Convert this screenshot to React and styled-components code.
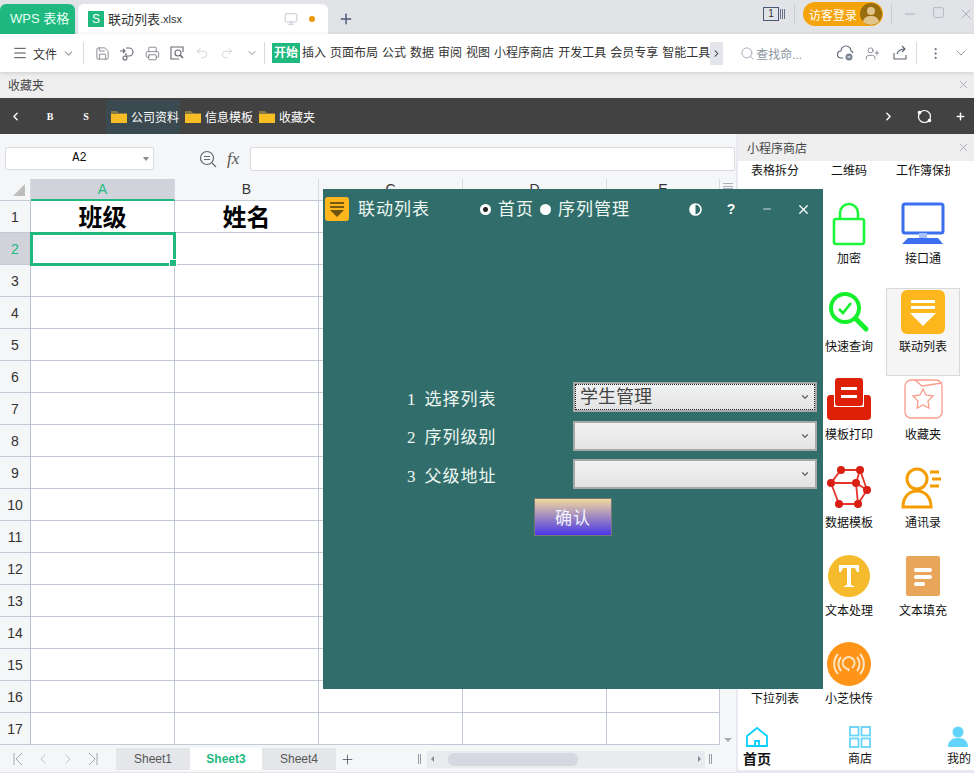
import React from "react";
import styled, { createGlobalStyle } from "styled-components";
import {
  ChevronDown,
  ChevronLeft,
  ChevronRight,
  Menu,
  Minus,
  Monitor,
  MoreVertical,
  Plus,
  Printer,
  Redo2,
  Save,
  Search,
  Square,
  Undo2,
  UserPlus,
  X,
} from "lucide-react";

const SANS = `"Liberation Sans", "Noto Sans CJK SC", sans-serif`;
const SONG = `"Liberation Serif", "Noto Sans CJK SC", serif`;

const GlobalStyle = createGlobalStyle`
  html, body {
    margin: 0;
    padding: 0;
    background: #fff;
  }
  * {
    box-sizing: border-box;
  }
`;

const Page = styled.div`
  position: relative;
  width: 974px;
  height: 773px;
  overflow: hidden;
  display: flex;
  flex-direction: column;
  font-family: ${SANS};
  font-size: 12px;
  color: #222;
  background: #fff;
`;

/* title bar */
const TitleBar = styled.div`
  height: 34px;
  flex: none;
  display: flex;
  align-items: flex-end;
  background: #e2e3e7;
`;
const AppTab = styled.div`
  width: 75px;
  height: 30px;
  background: #1fb97f;
  border-radius: 6px 6px 0 0;
  color: #e8fff5;
  font-size: 13px;
  line-height: 30px;
  padding-left: 10px;
`;
const DocTab = styled.div`
  width: 250px;
  height: 30px;
  margin-left: 3px;
  padding-bottom: 1px;
  background: #fff;
  border-radius: 6px 6px 0 0;
  display: flex;
  align-items: center;
  padding-left: 10px;
  font-size: 13px;
  color: #333;
`;
const DocBadge = styled.span`
  width: 16px;
  height: 16px;
  margin-right: 4px;
  background: #1fb97f;
  color: #fff;
  font-size: 12px;
  line-height: 16px;
  text-align: center;
`;
const DocExt = styled.span`
  font-size: 11px;
  flex: 1;
`;
const DocDot = styled.span`
  width: 6px;
  height: 6px;
  margin: 0 13px 0 11px;
  border-radius: 50%;
  background: #e89a0c;
`;
const NewTab = styled.div`
  width: 36px;
  height: 30px;
  display: flex;
  align-items: center;
  justify-content: center;
  color: #4a5878;
`;
const TitleRight = styled.div`
  margin-left: auto;
  margin-right: -6px;
  height: 34px;
  display: flex;
  align-items: center;
  padding-bottom: 6px;
`;
const WindowCount = styled.div`
  width: 16px;
  height: 14px;
  border: 1px solid #4a5878;
  color: #333;
  font-size: 10px;
  line-height: 12px;
  text-align: center;
  margin-right: 1px;
`;
const CountLines = styled.div`
  width: 5px;
  height: 10px;
  margin-right: 9px;
  background: repeating-linear-gradient(90deg, #6a7488 0 1px, transparent 1px 2px);
`;
const TitleSep = styled.div`
  width: 1px;
  height: 20px;
  background: #c9ccd3;
`;
const LoginPill = styled.div`
  width: 80px;
  height: 24px;
  margin: 0 8px;
  padding-left: 6px;
  border-radius: 12px;
  background: #f5a30a;
  color: #fff;
  font-size: 12px;
  display: flex;
  align-items: center;
  justify-content: space-between;
  padding-right: 1px;
`;
const WinButtons = styled.div`
  margin-left: 4px;
  display: flex;
`;
const WinButton = styled.div`
  width: 28px;
  display: flex;
  justify-content: center;
  color: #9aa2b4;
`;

/* ribbon */
const Ribbon = styled.div`
  height: 38px;
  flex: none;
  position: relative;
  z-index: 1;
  display: flex;
  align-items: center;
  background: #fff;
  box-shadow: 0 1px 4px rgba(0, 0, 0, 0.14);
  color: #333;
`;
const FileMenu = styled.div`
  width: 83px;
  display: flex;
  align-items: center;
  padding-left: 12px;
  gap: 5px;
  font-size: 12px;
`;
const RibbonSep = styled.div`
  width: 1px;
  height: 22px;
  margin-left: ${(p) => p.$left || 0}px;
  background: #d8dade;
  flex: none;
`;
const QuickTools = styled.div`
  width: 180px;
  padding-left: 6px;
  display: flex;
  align-items: center;
`;
const QuickTool = styled.span`
  width: 25px;
  display: flex;
  justify-content: center;
  color: ${(p) => (p.$off ? "#c6c8cc" : "#666a72")};
`;
const RibbonTabs = styled.div`
  display: flex;
  align-items: center;
  margin-left: 7px;
`;
const RibbonTab = styled.div`
  height: 20px;
  line-height: 20px;
  padding: 0 ${(p) => (p.$active ? "2px" : "0")};
  margin-right: ${(p) => (p.$active ? "2px" : "4px")};
  background: ${(p) => (p.$active ? "#1fb97f" : "transparent")};
  color: ${(p) => (p.$active ? "#fff" : "#333")};
  font-weight: ${(p) => (p.$active ? "bold" : "normal")};
  font-size: 12px;
  white-space: nowrap;
`;
const TabMore = styled.div`
  width: 13px;
  height: 23px;
  margin-left: -4px;
  background: #e3e5ea;
  display: flex;
  align-items: center;
  justify-content: center;
`;
const SearchBox = styled.div`
  margin-left: 17px;
  width: 92px;
  display: flex;
  align-items: center;
  gap: 1px;
  color: #8d93a0;
  font-size: 12px;
`;
const RibbonRight = styled.div`
  display: flex;
  align-items: center;
`;
const RibbonIcon = styled.span`
  width: ${(p) => p.$width || 27}px;
  display: flex;
  justify-content: center;
  color: #5a6272;
`;

/* favourites */
const FavHeader = styled.div`
  height: 26px;
  flex: none;
  display: flex;
  align-items: center;
  justify-content: space-between;
  padding: 0 4px 1px 8px;
  background: #eeeeef;
  color: #444;
`;
const CloseSmall = styled.span`
  display: flex;
  color: #858c9c;
`;
const DarkBar = styled.div`
  height: 36px;
  flex: none;
  display: flex;
  align-items: center;
  background: #424242;
  color: #fff;
`;
const DarkNav = styled.span`
  width: 32px;
  display: flex;
  justify-content: center;
  padding-right: 2px;
`;
const DriveLetter = styled.span`
  width: 36px;
  text-align: center;
  font-family: ${SONG};
  font-size: 10px;
  font-weight: bold;
`;
const FolderItem = styled.div`
  height: 34px;
  margin-top: 1px;
  margin-left: ${(p) => p.$left || 0}px;
  padding: 0 1px 0 5px;
  display: flex;
  align-items: center;
  gap: 4px;
  background: ${(p) => (p.$active ? "#3b4a50" : "transparent")};
  font-size: 12px;
`;
const DarkRight = styled.div`
  margin-left: auto;
  margin-right: -4px;
  display: flex;
  align-items: center;
`;
const DarkTool = styled.span`
  width: 36px;
  display: flex;
  justify-content: center;
`;

/* main area */
const Main = styled.div`
  flex: 1;
  display: flex;
  min-height: 0;
`;
const SheetPane = styled.div`
  width: 736px;
  flex: none;
  display: flex;
  flex-direction: column;
  background: #f5f6f8;
`;
const FormulaBar = styled.div`
  height: 45px;
  flex: none;
  padding: 13px 1px 0 5px;
  display: flex;
  align-items: flex-start;
`;
const NameBox = styled.div`
  width: 149px;
  height: 23px;
  position: relative;
  background: #fff;
  border: 1px solid #d9dbe0;
  border-radius: 2px;
  text-align: center;
  line-height: 21px;
  font-family: "Liberation Mono", monospace;
  font-size: 12px;
  color: #111;
  &::after {
    content: "";
    position: absolute;
    right: 4px;
    top: 9px;
    border: 3px solid transparent;
    border-top: 4px solid #888;
    border-bottom: 0;
  }
`;
const FormulaTools = styled.div`
  width: 96px;
  height: 23px;
  padding-left: 45px;
  display: flex;
  align-items: center;
  gap: 10px;
  color: #666a72;
`;
const Fx = styled.span`
  font-family: "Liberation Serif", serif;
  font-style: italic;
  font-size: 17px;
  color: #555;
`;
const FormulaInput = styled.div`
  flex: 1;
  height: 24px;
  background: #fff;
  border: 1px solid #d9dbe0;
  border-radius: 2px;
`;
const SheetBody = styled.div`
  flex: 1;
  min-height: 0;
  display: flex;
  overflow: hidden;
`;
const Grid = styled.div`
  width: 720px;
  flex: none;
  display: grid;
  grid-template-columns: 31px 144px 144px 144px 144px 113px;
  grid-template-rows: 22px repeat(17, 32px);
  background: #fff;
`;
const Corner = styled.div`
  background: #f5f6f8;
  border-right: 1px solid #d8dbe3;
  border-bottom: 1px solid #c2c8d6;
  position: relative;
  &::after {
    content: "";
    position: absolute;
    right: 5px;
    bottom: 4px;
    border-left: 12px solid transparent;
    border-bottom: 12px solid #bdbdbd;
  }
`;
const ColHead = styled.div`
  background: ${(p) => (p.$active ? "#d0d3da" : "#f5f6f8")};
  color: ${(p) => (p.$active ? "#1fb97f" : "#333")};
  border-right: 1px solid #d8dbe3;
  border-bottom: ${(p) => (p.$active ? "2px solid #1fb97f" : "1px solid #c2c8d6")};
  text-align: center;
  font-size: 14px;
  line-height: 21px;
`;
const RowHead = styled.div`
  background: ${(p) => (p.$active ? "#d0d3da" : "#f5f6f8")};
  color: ${(p) => (p.$active ? "#1fb97f" : "#333")};
  border-right: 1px solid #b9c1d2;
  border-bottom: 1px solid #c2c8d6;
  text-align: center;
  font-size: 14px;
  line-height: 32px;
`;
const Cell = styled.div`
  position: relative;
  border-right: 1px solid #c2c8d6;
  border-bottom: 1px solid #c2c8d6;
  text-align: center;
  font-size: 24px;
  font-weight: bold;
  line-height: 33px;
  color: #000;
  ${(p) =>
    p.$selected &&
    `
    z-index: 1;
    outline: 3px solid #1fb97f;
    outline-offset: -2px;
    &::after {
      content: "";
      position: absolute;
      right: -3px;
      bottom: -3px;
      width: 6px;
      height: 6px;
      background: #1fb97f;
      border: 1px solid #fff;
    }
  `}
`;
const VScroll = styled.div`
  flex: 1;
  display: flex;
  flex-direction: column;
  justify-content: space-between;
  align-items: center;
  padding: 4px 0 3px;
  background: #f5f6f8;
`;
const ScrollLines = styled.div`
  width: 10px;
  height: 6px;
  border-top: 1px solid #a9afbc;
  border-bottom: 1px solid #a9afbc;
  background: linear-gradient(#a9afbc, #a9afbc) center / 100% 1px no-repeat;
`;
const ScrollArrow = styled.div`
  border: 4px solid transparent;
  border-top: 4px solid #a4a9b5;
  border-bottom: 0;
`;
const TabBar = styled.div`
  height: 28px;
  flex: none;
  display: flex;
  align-items: flex-end;
  padding-bottom: 2px;
  background: #f5f6f8;
  border-bottom: 1px solid #e4e5ea;
`;
const TabNav = styled.div`
  width: 116px;
  height: 22px;
  padding-left: 5px;
  display: flex;
  align-items: center;
  color: #a4a9b5;
`;
const TabNavItem = styled.span`
  width: 25px;
  display: flex;
  justify-content: center;
`;
const SheetTab = styled.div`
  width: ${(p) => (p.$active ? "72px" : "74px")};
  height: 22px;
  line-height: 22px;
  text-align: center;
  font-size: 12px;
  background: ${(p) => (p.$active ? "#fff" : "#e5e6ea")};
  color: ${(p) => (p.$active ? "#1fb97f" : "#555")};
  font-weight: ${(p) => (p.$active ? "bold" : "normal")};
`;
const TabAdd = styled.div`
  width: 22px;
  height: 22px;
  display: flex;
  align-items: center;
  justify-content: center;
  color: #445;
`;
const Grip = styled.div`
  width: 3px;
  height: 10px;
  margin: 0 0 6px ${(p) => p.$left}px;
  border-left: 1px solid #99a;
  border-right: 1px solid #99a;
`;
const HScroll = styled.div`
  width: 278px;
  height: 17px;
  margin: 0 0 2px 6px;
  display: flex;
  align-items: center;
  position: relative;
  background: #eaebef;
  &::before,
  &::after {
    content: "";
    position: absolute;
    top: 5px;
    border: 3px solid transparent;
  }
  &::before {
    left: 4px;
    border-right: 3px solid #889;
    border-left: 0;
  }
  &::after {
    right: 4px;
    border-left: 3px solid #889;
    border-right: 0;
  }
`;
const HThumb = styled.div`
  width: 130px;
  height: 13px;
  margin-left: 21px;
  border-radius: 6px;
  background: #d5d8e0;
`;

/* store panel */
const StorePanel = styled.aside`
  flex: 1;
  min-width: 0;
  display: flex;
  flex-direction: column;
  padding-left: 2px;
  background: #fff;
  box-shadow: inset 2px 0 0 #e8e8f0;
  border-bottom: 3px solid #e8e8f0;
`;
const StoreHeader = styled.div`
  height: 27px;
  flex: none;
  display: flex;
  align-items: center;
  justify-content: space-between;
  padding: 0 4px 1px 9px;
  background: #eeeeef;
  color: #444;
`;
const StoreList = styled.div`
  flex: 1;
  min-height: 0;
  overflow: hidden;
`;
const StoreGrid = styled.div`
  margin-top: -49px;
  display: grid;
  grid-template-columns: repeat(3, 74px);
  grid-auto-rows: 88px;
`;
const StoreCell = styled.div`
  display: flex;
  flex-direction: column;
  align-items: center;
  padding-top: 1px;
  border: 1px solid ${(p) => (p.$active ? "#d9d9d9" : "transparent")};
  background: ${(p) => (p.$active ? "#f5f5f5" : "transparent")};
`;
const StoreIconBox = styled.div`
  width: 44px;
  height: 44px;
  flex: none;
`;
const StoreLabel = styled.div`
  width: 54px;
  margin-top: 4px;
  height: 18px;
  line-height: 18px;
  text-align: center;
  white-space: nowrap;
  overflow: hidden;
  font-size: 12px;
  color: #111;
`;
const BottomNav = styled.div`
  height: 46px;
  flex: none;
  display: grid;
  grid-template-columns: 38px 1fr 30px;
  background: #fff;
`;
const NavItem = styled.div`
  display: flex;
  flex-direction: column;
  align-items: ${(p) => p.$align || "center"};
  gap: 3px;
  padding-top: 2px;
  padding-left: ${(p) => p.$pad || 0}px;
  font-size: ${(p) => (p.$active ? "14px" : "12px")};
  font-weight: ${(p) => (p.$active ? "bold" : "normal")};
  line-height: 16px;
  color: #111;
  white-space: nowrap;
`;

/* dialog */
const Dialog = styled.section`
  position: absolute;
  left: 323px;
  top: 189px;
  width: 500px;
  height: 500px;
  z-index: 5;
  background: #316e6b;
  color: #eef6f2;
  font-family: ${SONG};
`;
const DialogTitle = styled.header`
  height: 40px;
  display: flex;
  align-items: center;
  padding-left: 2px;
`;
const DialogName = styled.div`
  width: 122px;
  margin: -3px 0 0 9px;
  font-size: 17px;
  letter-spacing: 1px;
`;
const Radio = styled.span`
  width: 11px;
  height: 11px;
  margin-right: 7px;
  border-radius: 50%;
  background: ${(p) => (p.$on ? "radial-gradient(#222 0 2px, #fff 3px)" : "#fff")};
`;
const RadioText = styled.span`
  margin: -3px 6px 0 0;
  font-size: 17px;
  letter-spacing: 1px;
`;
const DialogControls = styled.div`
  margin-left: auto;
  padding-right: 2px;
  display: flex;
`;
const DialogControl = styled.span`
  width: 36px;
  display: flex;
  justify-content: center;
  align-items: center;
  color: #fff;
  font-weight: bold;
  font-size: 14px;
  font-family: ${SANS};
`;
const Form = styled.div`
  padding: 153px 6px 0 84px;
  display: flex;
  flex-direction: column;
`;
const FormRow = styled.div`
  height: 30px;
  margin-bottom: 8.5px;
  display: flex;
  align-items: center;
  justify-content: space-between;
`;
const FormLabel = styled.label`
  font-size: 17px;
  letter-spacing: 1px;
  display: flex;
  align-items: baseline;
  gap: 8px;
`;
const SelectBox = styled.div`
  position: relative;
  width: 244px;
  height: 30px;
  padding-left: 5px;
  border: 2px solid #a8a8a8;
  background: linear-gradient(#f1f2f2, #e3e3e3);
  color: #444;
  font-size: 18px;
  line-height: 27px;
  ${(p) =>
    p.$focused &&
    `
    &::before {
      content: "";
      position: absolute;
      inset: 0;
      border: 1px dotted #222;
    }
  `}
`;
const SelectCaret = styled.span`
  position: absolute;
  right: 5px;
  top: 8px;
  display: flex;
  color: #666;
`;
const ConfirmButton = styled.button`
  display: block;
  width: 78px;
  height: 38px;
  margin: 0 0 0 127px;
  border: 1px solid #777;
  background: linear-gradient(#f2d99e, #4a36e6);
  color: #f2f4ff;
  font-family: inherit;
  font-size: 17px;
  letter-spacing: 1px;
`;

/* drawn icons */
const DropIcon = ({ size = 44 }) => (
  <svg width={size} height={size} viewBox="0 0 44 44">
    <rect width="44" height="44" rx="6" fill="#fdb71c" />
    <path d="M10 10h24v3H10zM10 16h24v3H10z" fill="#fff" />
    <path d="M9 23h26L22 36z" fill="#fff" />
  </svg>
);
const DialogDropIcon = () => (
  <svg width="24" height="24" viewBox="0 0 24 24">
    <rect width="24" height="24" rx="3" fill="#fdb71c" />
    <path d="M5 5h14v2H5zM5 9h14v2H5z" fill="#7a5a10" />
    <path d="M5 13h14l-7 7z" fill="#6c5210" />
  </svg>
);
const LockIcon = () => (
  <svg width="44" height="44" viewBox="0 0 44 44" fill="none" stroke="#1cf53a" strokeWidth="2.6">
    <rect x="7" y="17" width="30" height="25" rx="2" />
    <path d="M13 17v-6a9 9 0 0 1 18 0v6" />
  </svg>
);
const PcIcon = () => (
  <svg width="44" height="44" viewBox="0 0 44 44">
    <rect x="2" y="2" width="40" height="29" rx="2" fill="#fff" stroke="#3b6ff0" strokeWidth="3" />
    <path d="M18 31h8v5h-8z" fill="#a8c0f8" />
    <path d="M7 36h30l5 6H1z" fill="#3b6ff0" />
  </svg>
);
const QueryIcon = () => (
  <svg width="44" height="44" viewBox="0 0 44 44" fill="none" stroke="#14f02c">
    <circle cx="18" cy="18" r="14" strokeWidth="4" />
    <path d="M29 29l10 10" strokeWidth="5" strokeLinecap="round" />
    <path d="M12 19l4 4 8-10" strokeWidth="2.6" />
  </svg>
);
const PrintIcon = () => (
  <svg width="44" height="44" viewBox="0 0 44 44">
    <path d="M3 18h4v12h30V18h4q3 0 3 4v17q0 4-4 4H4q-4 0-4-4V22q0-4 3-4z" fill="#de2006" transform="translate(0 -1)" />
    <rect x="8" y="0" width="28" height="28" rx="3" fill="#de2006" />
    <path d="M14 9h16v3H14zM14 17h16v3H14z" fill="#fff" />
  </svg>
);
const FavIcon = () => (
  <svg width="44" height="44" viewBox="0 0 44 44" fill="none" stroke="#fb9c8c" strokeWidth="1.3">
    <rect x="4" y="2" width="37" height="38" rx="6" />
    <path d="M14 2l7 6 20-3" />
    <path d="M22 11l3 6 7 1-5 5 1 7-6-3-6 3 1-7-5-5 7-1z" />
  </svg>
);
const DataIcon = () => (
  <svg width="44" height="44" viewBox="0 0 44 44" fill="none" stroke="#e5352a" strokeWidth="1.8">
    <path d="M14 4h19l7 20-9 14H12L4 17zM4 17h25l11 7M29 17l4-13M29 17l2 21M4 17l8 21" />
    <g fill="#d91f14" stroke="none">
      <circle cx="14" cy="4" r="4" />
      <circle cx="33" cy="4" r="4" />
      <circle cx="4" cy="17" r="4" />
      <circle cx="29" cy="17" r="4" />
      <circle cx="40" cy="24" r="4" />
      <circle cx="12" cy="38" r="4" />
      <circle cx="31" cy="38" r="4" />
    </g>
  </svg>
);
const ContactIcon = () => (
  <svg width="44" height="44" viewBox="0 0 44 44" fill="none" stroke="#f59d00" strokeWidth="3">
    <circle cx="16" cy="13" r="10" />
    <path d="M2 41c0-10 6-16 14-16s14 6 14 16z" />
    <path d="M29 6h9M31 13h9M29 20h9" />
  </svg>
);
const TextIcon = () => (
  <svg width="44" height="44" viewBox="0 0 44 44">
    <circle cx="22" cy="22" r="21" fill="#f5bb2c" />
    <path d="M12 11h20v7h-2l-2-4h-4v17l3 1v1H17v-1l3-1V14h-4l-2 4h-2z" fill="#fff" />
  </svg>
);
const FillIcon = () => (
  <svg width="44" height="44" viewBox="0 0 44 44">
    <rect x="5" y="2" width="34" height="40" rx="2" fill="#e9a65a" />
    <rect x="13" y="14" width="18" height="4" rx="2" fill="#fff" />
    <rect x="13" y="21" width="18" height="4" rx="2" fill="#fff" />
    <rect x="13" y="28" width="11" height="4" rx="2" fill="#fff" />
  </svg>
);
const SendIcon = () => (
  <svg width="44" height="44" viewBox="0 0 44 44" fill="none" stroke="#ffe4c0" strokeWidth="2">
    <circle cx="22" cy="22" r="22" fill="#ff9418" stroke="none" />
    <path d="M22 29l-1-2a6 6 0 1 1 4-1" />
    <path d="M14 15a11 11 0 0 0 0 14M30 15a11 11 0 0 1 0 14M11 12a15 15 0 0 0 0 20M33 12a15 15 0 0 1 0 20" />
  </svg>
);
const FolderIcon = () => (
  <svg width="16" height="14" viewBox="0 0 16 14">
    <path d="M0 1h6l2 2h8v2H0z" fill="#8a7a48" />
    <path d="M0 4h16v9H0z" fill="#f7bd24" />
  </svg>
);
const RefreshRing = () => (
  <svg width="15" height="15" viewBox="0 0 15 15" fill="none" stroke="#fff" strokeWidth="1.2">
    <circle cx="7.5" cy="7.5" r="6" />
    <circle cx="2.5" cy="3.5" r="1.2" fill="#fff" />
    <circle cx="12.5" cy="11.5" r="1.2" fill="#fff" />
  </svg>
);
const Avatar = () => (
  <svg width="22" height="22" viewBox="0 0 22 22">
    <circle cx="11" cy="11" r="11" fill="#9a6c10" />
    <circle cx="11" cy="8" r="4" fill="#e0c48c" />
    <path d="M3 19c1-5 4-6 8-6s7 1 8 6q-8 6-16 0z" fill="#e0c48c" />
  </svg>
);
const PaintIcon = () => (
  <svg width="16" height="16" viewBox="0 0 16 16" fill="none" stroke="#666a72" strokeWidth="1.1">
    <path d="M7 3h3a4 4 0 0 1 0 8H8M1 6h5M4 4l2 2-2 2M7 8v4" />
    <circle cx="6" cy="13" r="2" />
  </svg>
);
const PreviewIcon = () => (
  <svg width="16" height="16" viewBox="0 0 16 16" fill="none" stroke="#666a72" strokeWidth="1.1">
    <path d="M14 7V2H2v12h8" />
    <circle cx="9" cy="8" r="3" />
    <path d="M11 10l3 3" strokeWidth="1.6" />
  </svg>
);
const CloudIcon = () => (
  <svg width="18" height="16" viewBox="0 0 18 16" fill="none" stroke="#5a6272" strokeWidth="1.1">
    <path d="M6 13H4a3 3 0 0 1 0-7 5 5 0 0 1 10 0 3 3 0 0 1 2 2" />
    <circle cx="12" cy="12" r="3.5" fill="#7c8494" stroke="none" />
    <path d="M10.5 12h3" stroke="#fff" />
  </svg>
);
const ShareIcon = () => (
  <svg width="16" height="16" viewBox="0 0 16 16" fill="none" stroke="#5a6272" strokeWidth="1.1">
    <path d="M2 8v6h12v-4M5 9c1-3 4-5 8-5M10 1l3 3-3 3" />
  </svg>
);
const ZoomEqual = () => (
  <svg width="18" height="18" viewBox="0 0 18 18" fill="none" stroke="#666a72" strokeWidth="1.2">
    <circle cx="8" cy="8" r="6.5" />
    <path d="M5 6.5h6M5 9.5h6M13 13l4 4" />
  </svg>
);
const EdgeLeft = () => (
  <svg width="10" height="14" viewBox="0 0 10 14" fill="none" stroke="currentColor">
    <path d="M1 1v12M9 1L3 7l6 6" />
  </svg>
);
const EdgeRight = () => (
  <svg width="10" height="14" viewBox="0 0 10 14" fill="none" stroke="currentColor">
    <path d="M9 1v12M1 1l6 6-6 6" />
  </svg>
);
const HalfCircle = () => (
  <svg width="13" height="13" viewBox="0 0 13 13">
    <circle cx="6.5" cy="6.5" r="5.5" fill="none" stroke="#fff" strokeWidth="1.6" />
    <path d="M6.5 1a5.5 5.5 0 0 0 0 11z" fill="#fff" />
  </svg>
);
const HomeIcon = () => (
  <svg width="22" height="22" viewBox="0 0 22 22" fill="none" stroke="#0ad0ff" strokeWidth="1.8">
    <path d="M1 10l10-8 10 8v10H1zM9 20v-5h4v5" />
  </svg>
);
const ShopIcon = () => (
  <svg width="22" height="22" viewBox="0 0 22 22" fill="none" stroke="#66d4fb" strokeWidth="1.8">
    <rect x="1" y="1" width="8.5" height="8.5" />
    <rect x="12.5" y="1" width="8.5" height="8.5" />
    <rect x="1" y="12.5" width="8.5" height="8.5" />
    <rect x="12.5" y="12.5" width="8.5" height="8.5" />
  </svg>
);
const MineIcon = () => (
  <svg width="22" height="22" viewBox="0 0 22 22" fill="#62d4fb">
    <circle cx="11" cy="6" r="5.5" />
    <path d="M1 21c0-6 4-9 10-9s10 3 10 9z" />
  </svg>
);

const TABS = ["插入", "页面布局", "公式", "数据", "审阅", "视图", "小程序商店", "开发工具", "会员专享", "智能工具"];
const COLUMNS = ["A", "B", "C", "D", "E"];
const ROWS = Array.from({ length: 17 }, (_, i) => i + 1);
const STORE = [
  { label: "表格拆分" },
  { label: "二维码" },
  { label: "工作簿保护" },
  {},
  { label: "加密", icon: <LockIcon /> },
  { label: "接口通", icon: <PcIcon /> },
  {},
  { label: "快速查询", icon: <QueryIcon /> },
  { label: "联动列表", icon: <DropIcon />, active: true },
  {},
  { label: "模板打印", icon: <PrintIcon /> },
  { label: "收藏夹", icon: <FavIcon /> },
  {},
  { label: "数据模板", icon: <DataIcon /> },
  { label: "通讯录", icon: <ContactIcon /> },
  {},
  { label: "文本处理", icon: <TextIcon /> },
  { label: "文本填充", icon: <FillIcon /> },
  { label: "下拉列表" },
  { label: "小芝快传", icon: <SendIcon /> },
  {},
];
const FIELDS = [
  { no: 1, label: "选择列表", value: "学生管理", focused: true },
  { no: 2, label: "序列级别" },
  { no: 3, label: "父级地址" },
];

const App = () => {
  return (
    <Page>
      <GlobalStyle />
      <TitleBar>
        <AppTab>WPS 表格</AppTab>
        <DocTab>
          <DocBadge>S</DocBadge>
          联动列表<DocExt>.xlsx</DocExt>
          <Monitor size={14} color="#b9bec9" strokeWidth={1.4} />
          <DocDot />
        </DocTab>
        <NewTab>
          <Plus size={16} strokeWidth={2.2} />
        </NewTab>
        <TitleRight>
          <WindowCount>1</WindowCount>
          <CountLines />
          <TitleSep />
          <LoginPill>
            访客登录
            <Avatar />
          </LoginPill>
          <TitleSep />
          <WinButtons>
            <WinButton>
              <Minus size={16} strokeWidth={1.2} />
            </WinButton>
            <WinButton>
              <Square size={13} strokeWidth={1.2} />
            </WinButton>
            <WinButton>
              <X size={16} strokeWidth={1.2} />
            </WinButton>
          </WinButtons>
        </TitleRight>
      </TitleBar>

      <Ribbon>
        <FileMenu>
          <Menu size={16} strokeWidth={1.3} />
          文件
          <ChevronDown size={13} color="#999" />
        </FileMenu>
        <RibbonSep />
        <QuickTools>
          <QuickTool>
            <Save size={15} strokeWidth={1.2} />
          </QuickTool>
          <QuickTool>
            <PaintIcon />
          </QuickTool>
          <QuickTool>
            <Printer size={15} strokeWidth={1.2} />
          </QuickTool>
          <QuickTool>
            <PreviewIcon />
          </QuickTool>
          <QuickTool $off>
            <Undo2 size={14} strokeWidth={1.3} />
          </QuickTool>
          <QuickTool $off>
            <Redo2 size={14} strokeWidth={1.3} />
          </QuickTool>
          <QuickTool>
            <ChevronDown size={12} strokeWidth={1.6} />
          </QuickTool>
        </QuickTools>
        <RibbonSep />
        <RibbonTabs>
          <RibbonTab $active>开始</RibbonTab>
          {TABS.map((tab) => (
            <RibbonTab key={tab}>{tab}</RibbonTab>
          ))}
          <TabMore>
            <ChevronRight size={11} strokeWidth={2.2} />
          </TabMore>
        </RibbonTabs>
        <SearchBox>
          <Search size={15} strokeWidth={1.2} />
          查找命...
        </SearchBox>
        <RibbonRight>
          <RibbonIcon>
            <CloudIcon />
          </RibbonIcon>
          <RibbonIcon>
            <UserPlus size={15} strokeWidth={1.1} />
          </RibbonIcon>
          <RibbonIcon>
            <ShareIcon />
          </RibbonIcon>
          <RibbonSep $left={3} />
          <RibbonIcon $width={36}>
            <MoreVertical size={15} strokeWidth={1.5} />
          </RibbonIcon>
          <RibbonIcon $width={16}>
            <ChevronDown size={20} strokeWidth={1} />
          </RibbonIcon>
        </RibbonRight>
      </Ribbon>

      <FavHeader>
        收藏夹
        <CloseSmall>
          <X size={13} strokeWidth={1.1} />
        </CloseSmall>
      </FavHeader>
      <DarkBar>
        <DarkNav>
          <ChevronLeft size={13} strokeWidth={2.6} />
        </DarkNav>
        <DriveLetter>B</DriveLetter>
        <DriveLetter>S</DriveLetter>
        <FolderItem $active $left={2}>
          <FolderIcon />
          公司资料
        </FolderItem>
        <FolderItem>
          <FolderIcon />
          信息模板
        </FolderItem>
        <FolderItem>
          <FolderIcon />
          收藏夹
        </FolderItem>
        <DarkRight>
          <DarkTool>
            <ChevronRight size={13} strokeWidth={2.6} />
          </DarkTool>
          <DarkTool>
            <RefreshRing />
          </DarkTool>
          <DarkTool>
            <Plus size={11} strokeWidth={3} />
          </DarkTool>
        </DarkRight>
      </DarkBar>

      <Main>
        <SheetPane>
          <FormulaBar>
            <NameBox>A2</NameBox>
            <FormulaTools>
              <ZoomEqual />
              <Fx>fx</Fx>
            </FormulaTools>
            <FormulaInput />
          </FormulaBar>
          <SheetBody>
            <Grid>
              <Corner />
              {COLUMNS.map((col, i) => (
                <ColHead key={col} $active={i === 0}>
                  {col}
                </ColHead>
              ))}
              {ROWS.map((row) => (
                <React.Fragment key={row}>
                  <RowHead $active={row === 2}>{row}</RowHead>
                  {COLUMNS.map((col, i) => (
                    <Cell key={col} $selected={row === 2 && i === 0}>
                      {row === 1 && i === 0 && "班级"}
                      {row === 1 && i === 1 && "姓名"}
                    </Cell>
                  ))}
                </React.Fragment>
              ))}
            </Grid>
            <VScroll>
              <ScrollLines />
              <ScrollArrow />
            </VScroll>
          </SheetBody>
          <TabBar>
            <TabNav>
              <TabNavItem>
                <EdgeLeft />
              </TabNavItem>
              <TabNavItem>
                <ChevronLeft size={16} strokeWidth={1} />
              </TabNavItem>
              <TabNavItem>
                <ChevronRight size={16} strokeWidth={1} />
              </TabNavItem>
              <TabNavItem>
                <EdgeRight />
              </TabNavItem>
            </TabNav>
            <SheetTab>Sheet1</SheetTab>
            <SheetTab $active>Sheet3</SheetTab>
            <SheetTab>Sheet4</SheetTab>
            <TabAdd>
              <Plus size={15} strokeWidth={1.2} />
            </TabAdd>
            <Grip $left={60} />
            <HScroll>
              <HThumb />
            </HScroll>
            <Grip $left={4} />
          </TabBar>
        </SheetPane>

        <StorePanel>
          <StoreHeader>
            小程序商店
            <CloseSmall>
              <X size={13} strokeWidth={1.1} />
            </CloseSmall>
          </StoreHeader>
          <StoreList>
            <StoreGrid>
              {STORE.map((item, i) => (
                <StoreCell key={i} $active={item.active}>
                  <StoreIconBox>{item.icon}</StoreIconBox>
                  {item.label && <StoreLabel>{item.label}</StoreLabel>}
                </StoreCell>
              ))}
            </StoreGrid>
          </StoreList>
          <BottomNav>
            <NavItem $active>
              <HomeIcon />
              首页
            </NavItem>
            <NavItem>
              <ShopIcon />
              商店
            </NavItem>
            <NavItem $align="flex-start" $pad={3}>
              <MineIcon />
              我的
            </NavItem>
          </BottomNav>
        </StorePanel>
      </Main>

      <Dialog>
        <DialogTitle>
          <DialogDropIcon />
          <DialogName>联动列表</DialogName>
          <Radio $on />
          <RadioText>首页</RadioText>
          <Radio />
          <RadioText>序列管理</RadioText>
          <DialogControls>
            <DialogControl>
              <HalfCircle />
            </DialogControl>
            <DialogControl>?</DialogControl>
            <DialogControl>
              <Minus size={12} strokeWidth={1.5} />
            </DialogControl>
            <DialogControl>
              <X size={15} strokeWidth={2} />
            </DialogControl>
          </DialogControls>
        </DialogTitle>
        <Form>
          {FIELDS.map((field) => (
            <FormRow key={field.no}>
              <FormLabel>
                <span>{field.no}</span>
                {field.label}
              </FormLabel>
              <SelectBox $focused={field.focused}>
                {field.value}
                <SelectCaret>
                  <ChevronDown size={10} strokeWidth={3} />
                </SelectCaret>
              </SelectBox>
            </FormRow>
          ))}
          <ConfirmButton type="button">确认</ConfirmButton>
        </Form>
      </Dialog>
    </Page>
  );
};

export default App;
